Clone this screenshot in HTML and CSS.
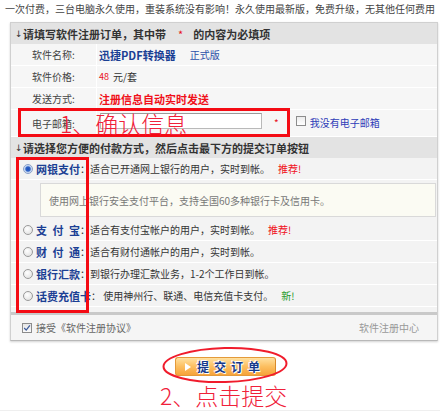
FILE: index.html
```html
<!DOCTYPE html>
<html lang="zh-CN">
<head>
<meta charset="utf-8">
<link rel="stylesheet" href="styles.css">
</head>
<body>
<div class="page">
  <p class="intro">一次付费，三台电脑永久使用，重装系统没有影响！永久使用最新版，免费升级，无其他任何费用</p>
  <div class="panel">
    <div class="head"><span class="arrow">↓</span>请填写软件注册订单，其中带<span class="req">*</span>的内容为必填项</div>
    <div class="row">
      <div class="lbl">软件名称:</div>
      <div class="val"><b class="prod">迅捷PDF转换器</b><span class="edition">正式版</span></div>
    </div>
    <div class="row">
      <div class="lbl">软件价格:</div>
      <div class="val"><span class="price">48</span><span class="unit">元/套</span></div>
    </div>
    <div class="row">
      <div class="lbl">发送方式:</div>
      <div class="val"><b class="send">注册信息自动实时发送</b></div>
    </div>
    <div class="row email">
      <div class="lbl">电子邮箱:</div>
      <div class="val">
        <span class="input"></span><span class="star">*</span>
        <span class="chk"></span><span class="nomail">我没有电子邮箱</span>
      </div>
      <div class="mark mark-email"></div>
      <div class="note note1">1、确认信息</div>
    </div>
    <div class="head"><span class="arrow">↓</span>请选择您方便的付款方式，然后点击最下方的提交订单按钮</div>
    <div class="pay">
      <div class="prow"><span class="radio on"></span><b class="pname">网银支付</b><span class="desc">：适合已开通网上银行的用户，实时到帐。<span class="hot">推荐!</span></span></div>
      <div class="info">使用网上银行安全支付平台，支持全国60多种银行卡及信用卡。</div>
      <div class="prow"><span class="radio"></span><b class="pname"><span class="sp">支付</span>宝</b><span class="desc">：适合有支付宝帐户的用户，实时到帐。<span class="hot">推荐!</span></span></div>
      <div class="prow"><span class="radio"></span><b class="pname"><span class="sp">财付</span>通</b><span class="desc">：适合有财付通帐户的用户，实时到帐。</span></div>
      <div class="prow"><span class="radio"></span><b class="pname">银行汇款</b><span class="desc">：到银行办理汇款业务，1-2个工作日到帐。</span></div>
      <div class="prow"><span class="radio"></span><b class="pname">话费充值卡</b><span class="desc">：&nbsp;使用神州行、联通、电信充值卡支付。<span class="new">新!</span></span></div>
      <div class="mark mark-pay"></div>
    </div>
    <div class="foot">
      <span class="chk checked"><svg viewBox="0 0 10 10" width="8" height="8"><path d="M1.5 5 L4 7.6 L8.6 1.8" fill="none" stroke="#3d5b9a" stroke-width="1.6"/></svg></span>
      <span class="agree">接受《软件注册协议》</span>
      <span class="center">软件注册中心</span>
    </div>
  </div>
  <div class="submit-area">
    <div class="btn"><span class="tri"></span><span class="btn-text">提交订单</span></div>
    <svg class="ellipse" viewBox="0 0 126 38" width="126" height="38"><ellipse cx="63" cy="19" rx="61.5" ry="17" fill="none" stroke="#f01c2c" stroke-width="2" transform="rotate(-1.5 63 19)"/></svg>
    <div class="note note2">2、点击提交</div>
  </div>
</div>
</body>
</html>
```
FILE: styles.css
```css
* { box-sizing: border-box; }
body {
  margin: 0;
  background: #fff;
  font-family: "Noto Sans CJK SC", "Noto Sans", sans-serif;
  font-size: 10px;
  color: #333;
}
.page { width: 440px; height: 414px; overflow: hidden; }
.intro {
  margin: 0;
  height: 22px;
  line-height: 18px;
  padding-left: 5px;
  color: #444;
  white-space: nowrap;
  overflow: hidden;
}
.panel {
  margin-left: 10px;
  width: 428px;
  border: 1px solid #d0d0d0;
  border-bottom-color: #b8b8b8;
  box-shadow: 0 1px 2px rgba(0,0,0,0.18);
  background: #f5f5f5;
}
.head {
  display: flex;
  align-items: center;
  height: 21px;
  background: #e3e3e3;
  font-weight: bold;
  font-size: 11px;
  padding-left: 4px;
  color: #333;
  white-space: nowrap;
  overflow: hidden;
}
.arrow {
  display: inline-block;
  flex: none;
  width: 8px;
  font-family: "DejaVu Sans", sans-serif;
  font-size: 9px;
  font-weight: normal;
  overflow: hidden;
}
.req { color: #e8101a; margin: 0 10px 0 12px; font-weight: normal; }
.row {
  position: relative;
  display: flex;
  height: 22px;
  border-bottom: 1px solid #fff;
  background: #f6f6f6;
}
.row.email { height: 27px; }
.lbl {
  width: 86px;
  flex: none;
  padding-left: 21px;
  border-right: 1px solid #fff;
  display: flex;
  align-items: center;
  color: #444;
}
.val { display: flex; align-items: center; padding-left: 2px; }
.prod { color: #1b3f94; font-size: 11px; }
.edition { color: #2a4fa8; margin-left: 14px; }
.price { color: #e8101a; font-size: 9px; }
.unit { margin-left: 4px; }
.send { color: #f0101a; font-size: 11px; }
.input {
  display: block;
  width: 162px;
  height: 16px;
  margin-left: 1px;
  margin-top: -4px;
  background: #fff;
  border: 1px solid #b9b9b9;
  border-top-color: #9a9a9a;
}
.star { color: #e8101a; margin-left: 12px; margin-top: -2px; }
.chk {
  display: inline-flex;
  align-items: center;
  justify-content: center;
  width: 10px;
  height: 10px;
  border: 1px solid #8c8c8c;
  background: linear-gradient(#ececec, #fff);
  flex: none;
}
.val .chk { margin-left: 17px; margin-top: -4px; }
.nomail { color: #2e3cb8; margin-left: 4px; margin-top: -2px; }
.mark { position: absolute; border: 3px solid #f40b14; pointer-events: none; }
.mark-email { left: 7px; top: -2px; width: 272px; height: 29px; }
.note {
  position: absolute;
  color: #f0213a;
  font-size: 23px;
  line-height: 26px;
  white-space: nowrap;
  font-weight: 300;
}
.note1 { left: 49px; top: 0px; }
.pay { position: relative; background: #f3f3f3; padding-bottom: 5px; }
.prow {
  display: flex;
  align-items: center;
  height: 22px;
  padding-left: 12px;
  border-bottom: 1px solid #fff;
  white-space: nowrap;
  color: #333;
}
.radio {
  flex: none;
  width: 10px;
  height: 10px;
  border-radius: 50%;
  border: 1px solid #9a9a9a;
  background: radial-gradient(circle at 40% 35%, #fff, #dcdcdc);
  margin-right: 3px;
}
.radio.on {
  border-color: #8aa0c8;
  background: radial-gradient(circle at 50% 50%, #1c4fb8 0, #2f64c8 2.2px, #bcd0ef 3.2px, #f2f6fc 5px);
}
.pname { color: #1b3f94; font-size: 11px; }
.sp { letter-spacing: 5.5px; }
.desc { color: #333; }
.hot { color: #f0101a; margin-left: 8px; }
.new { color: #2a9a2a; margin-left: 8px; }
.info {
  margin: 3px 1px 2px 29px;
  height: 34px;
  border: 1px solid #d9d9d9;
  background: #fbfbf3;
  display: flex;
  align-items: center;
  padding-left: 8px;
  color: #777;
  white-space: nowrap;
}
.mark-pay { left: 5px; top: -1px; width: 73px; height: 156px; }
.foot {
  display: flex;
  align-items: center;
  height: 28px;
  border-top: 3px solid #c9c9c9;
  background: #f5f5f5;
  padding: 0 18px 0 11px;
}
.foot .chk { background: linear-gradient(#e6e6e6, #fafafa); }
.agree { color: #666; margin-left: 4px; }
.center { color: #999; margin-left: auto; }
.submit-area {
  position: relative;
  height: 70px;
  border-bottom: 1px solid #efefef;
  padding-top: 16px;
}
.btn {
  display: flex;
  align-items: center;
  margin-left: 175px;
  width: 101px;
  height: 19px;
  border: 1px solid #e49a3a;
  border-right-color: #d98a2a;
  border-radius: 3px;
  background: linear-gradient(#ffe1a0, #fcbf60 50%, #f6a33a);
}
.tri {
  width: 0;
  height: 0;
  margin-left: 9px;
  border-left: 6px solid #fff;
  border-top: 4.5px solid transparent;
  border-bottom: 4.5px solid transparent;
}
.btn-text {
  margin-left: 6px;
  font-size: 12px;
  font-weight: bold;
  letter-spacing: 5px;
  color: #163a8c;
  text-shadow: 0 0 2px #fff, 0 0 1px #fff, 1px 1px 0 #fff, -1px -1px 0 #fff;
  line-height: 17px;
}
.ellipse { position: absolute; left: 162px; top: 5px; }
.note2 { left: 160px; top: 41px; }
```
